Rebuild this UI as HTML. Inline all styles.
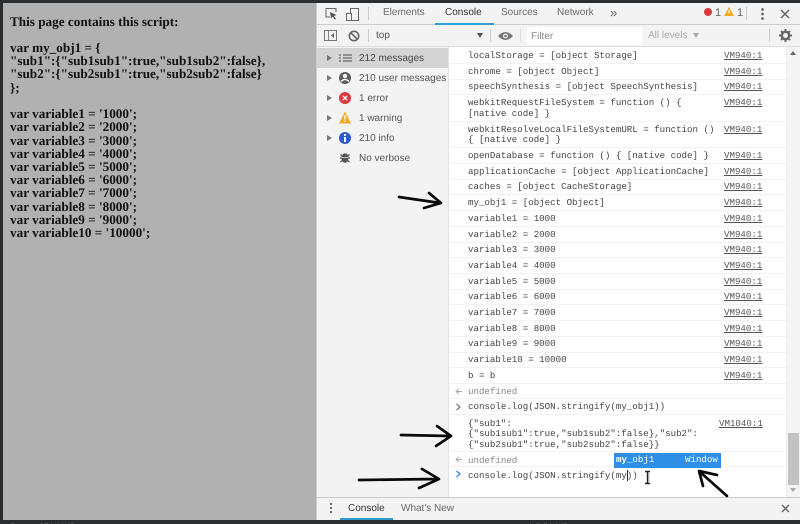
<!DOCTYPE html>
<html><head><meta charset="utf-8">
<style>
html,body{margin:0;padding:0;width:800px;height:524px;overflow:hidden;background:#2b2e31}
#root{position:absolute;left:0;top:0;width:800px;height:524px;overflow:hidden;filter:blur(.35px);text-rendering:geometricPrecision}
.a{position:absolute}
#page{position:absolute;left:3px;top:3px;width:313px;height:517px;background:#b1b1b1}
.p{position:absolute;left:10px;font:bold 13.2px/13px "Liberation Serif",serif;color:#111;white-space:pre}
#dt{position:absolute;left:316px;top:3px;width:484px;height:517px;background:#fff}
.t{position:absolute;font:10px/12px "Liberation Sans",sans-serif;color:#5a5a5a;white-space:pre}
.m{position:absolute;left:468px;font:9.15px/11px "Liberation Mono",monospace;color:#444;white-space:pre}
.v{position:absolute;left:724px;font:9.13px/11px "Liberation Mono",monospace;color:#555;text-decoration:underline;white-space:pre}
.l{position:absolute;left:449px;width:337px;height:1px;background:#f2f2f2}
.tri{position:absolute;left:327px;width:0;height:0;border-left:5px solid #777;border-top:3px solid transparent;border-bottom:3px solid transparent}
</style></head><body>
<div id="root">
<div id="page"></div>
<div class="p" style="top:15px">This page contains this script:</div>
<div class="p" style="top:41px">var my_obj1 = {</div>
<div class="p" style="top:54px">"sub1":{"sub1sub1":true,"sub1sub2":false},</div>
<div class="p" style="top:67px">"sub2":{"sub2sub1":true,"sub2sub2":false}</div>
<div class="p" style="top:81px">};</div>
<div class="p" style="top:107px">var variable1 = '1000';</div>
<div class="p" style="top:120px">var variable2 = '2000';</div>
<div class="p" style="top:134px">var variable3 = '3000';</div>
<div class="p" style="top:147px">var variable4 = '4000';</div>
<div class="p" style="top:160px">var variable5 = '5000';</div>
<div class="p" style="top:173px">var variable6 = '6000';</div>
<div class="p" style="top:186px">var variable7 = '7000';</div>
<div class="p" style="top:200px">var variable8 = '8000';</div>
<div class="p" style="top:213px">var variable9 = '9000';</div>
<div class="p" style="top:226px">var variable10 = '10000';</div>

<div id="dt"></div>
<!-- toolbars -->
<div class="a" style="left:316px;top:3px;width:484px;height:21px;background:#f3f3f3;border-bottom:1px solid #ccc"></div>
<div class="a" style="left:316px;top:25px;width:484px;height:21px;background:#f3f3f3;border-bottom:1px solid #ddd"></div>
<div class="a" style="left:316px;top:3px;width:1px;height:517px;background:#ccc"></div>
<div class="a" style="left:368px;top:7px;width:1px;height:13px;background:#ccc"></div>
<svg class="a" style="left:323px;top:6px" width="50" height="16" viewBox="0 0 50 16">
<path d="M7 11H3V2.500H13V6" fill="none" stroke="#666" stroke-width="1"/><path d="M7 6l6.500 3-2.500 1 2 3-1.200.6-2-3L8 12.500z" fill="#555"/>
<rect x="27.500" y="2.500" width="8" height="12" fill="none" stroke="#666"/><rect x="23.500" y="7.500" width="5" height="7" fill="#f3f3f3" stroke="#666"/>
</svg>
<div class="t" style="left:383px;top:7px;color:#6a6a6a">Elements</div>
<div class="t" style="left:445px;top:7px;color:#333">Console</div>
<div class="a" style="left:435px;top:23px;width:59px;height:2px;background:#2f9fd0"></div>
<div class="t" style="left:501px;top:7px;color:#6a6a6a">Sources</div>
<div class="t" style="left:557px;top:7px;color:#6a6a6a">Network</div>
<div class="t" style="left:610px;top:7px;font-size:13px;color:#666">»</div>
<div class="a" style="left:704px;top:8px;width:8px;height:8px;border-radius:50%;background:#d93a3f"></div>
<div class="t" style="left:715px;top:7px;color:#666;font-size:11px">1</div>
<svg class="a" style="left:724px;top:7px" width="10" height="9"><path d="M5 0L10 9H0z" fill="#f2ab26"/><rect x="4.500" y="3" width="1" height="3.500" fill="#fff"/></svg>
<div class="t" style="left:737px;top:7px;color:#666;font-size:11px">1</div>
<div class="a" style="left:746px;top:7px;width:1px;height:13px;background:#ccc"></div>
<div class="a" style="left:761px;top:8px;width:3px;height:3px;border-radius:50%;background:#666;box-shadow:0 5px 0 #666,0 10px 0 #666;transform:scale(.9)"></div>
<svg class="a" style="left:780px;top:9px" width="10" height="10"><path d="M1 1L9 9M9 1L1 9" stroke="#666" stroke-width="1.500"/></svg>

<!-- second toolbar -->
<svg class="a" style="left:323px;top:29px" width="40" height="14" viewBox="0 0 40 14">
<rect x="1.500" y="1.500" width="12" height="10" fill="none" stroke="#777"/><rect x="5" y="2" width="1" height="9" fill="#888"/><path d="M11 4L8 6.500 11 9z" fill="#666"/>
<circle cx="31" cy="7" r="4.700" fill="none" stroke="#666" stroke-width="1.600"/><path d="M27.800 3.800l6.400 6.400" stroke="#666" stroke-width="1.600"/>
</svg>
<div class="a" style="left:368px;top:29px;width:1px;height:13px;background:#ccc"></div>
<div class="t" style="left:376px;top:30px;color:#555">top</div>
<div class="a" style="left:477px;top:33px;border-top:5px solid #555;border-left:3px solid transparent;border-right:3px solid transparent"></div>
<div class="a" style="left:490px;top:29px;width:1px;height:13px;background:#ccc"></div>
<svg class="a" style="left:498px;top:31px" width="15" height="10"><path d="M0 5Q7.500-3 15 5Q7.500 13 0 5z" fill="#777"/><circle cx="7.500" cy="5" r="2.500" fill="#f3f3f3"/><circle cx="7.500" cy="5" r="1.300" fill="#777"/></svg>
<div class="a" style="left:520px;top:29px;width:1px;height:13px;background:#ddd"></div>
<div class="a" style="left:527px;top:27px;width:115px;height:18px;background:#fff"></div>
<div class="t" style="left:531px;top:31px;color:#888">Filter</div>
<div class="t" style="left:648px;top:30px;color:#aaa">All levels</div>
<div class="a" style="left:693px;top:33px;border-top:5px solid #aaa;border-left:3px solid transparent;border-right:3px solid transparent"></div>
<div class="a" style="left:769px;top:29px;width:1px;height:13px;background:#ccc"></div>
<svg class="a" style="left:779px;top:29px" width="13" height="13" viewBox="0 0 13 13"><circle cx="6.500" cy="6.500" r="3.700" fill="none" stroke="#666" stroke-width="2.400"/><path d="M6.500 0v2.500M6.500 10.500V13M0 6.500h2.500M10.500 6.500H13M2 2l1.700 1.700M9.300 9.300L11 11M11 2L9.300 3.700M3.700 9.300L2 11" stroke="#666" stroke-width="2"/></svg>

<!-- sidebar -->
<div class="a" style="left:317px;top:47px;width:131px;height:450px;background:#f3f3f3;border-right:1px solid #e2e2e2"></div>
<div class="a" style="left:317px;top:48px;width:131px;height:20px;background:#d4d4d4"></div>
<div class="tri" style="top:55px"></div><div class="tri" style="top:75px"></div><div class="tri" style="top:95px"></div><div class="tri" style="top:115px"></div><div class="tri" style="top:135px"></div>
<svg class="a" style="left:338px;top:50px" width="16" height="118" viewBox="0 0 16 118">
<path d="M1 5h2M5 5h9M1 8h2M5 8h9M1 11h2M5 11h9" stroke="#666" stroke-width="1.300" fill="none"/>
<circle cx="7" cy="28" r="6" fill="#5a5a5a"/><circle cx="7" cy="26" r="2.200" fill="#f3f3f3"/><path d="M3 31.500Q7 27.500 11 31.500" stroke="#f3f3f3" stroke-width="1.500" fill="none"/>
<circle cx="7" cy="48" r="6" fill="#d93a3f"/><path d="M4.800 45.800l4.400 4.400M9.200 45.800l-4.400 4.400" stroke="#fff" stroke-width="1.300"/>
<path d="M7 61.500L13 73.500H1z" fill="#f2ab26"/><rect x="6.300" y="65" width="1.400" height="4.500" fill="#fff"/><rect x="6.300" y="70.500" width="1.400" height="1.400" fill="#fff"/>
<circle cx="7" cy="88" r="6" fill="#2a5bd0"/><rect x="6" y="87" width="2" height="5" fill="#fff"/><rect x="6" y="84" width="2" height="2" fill="#fff"/>
<ellipse cx="7" cy="108" rx="3.500" ry="4.800" fill="#555"/><path d="M2.500 104.500l2.500 2M11.500 104.500l-2.500 2M2 108h3M9 108h3M2.500 112l2.500-2M11.500 112l-2.500-2" stroke="#555" stroke-width="1.200"/><path d="M4 107.500h6" stroke="#f3f3f3" stroke-width=".7"/>
</svg>
<div class="t" style="left:359px;top:53px;color:#444">212 messages</div>
<div class="t" style="left:359px;top:73px;color:#555">210 user messages</div>
<div class="t" style="left:359px;top:93px;color:#555">1 error</div>
<div class="t" style="left:359px;top:113px;color:#555">1 warning</div>
<div class="t" style="left:359px;top:133px;color:#555">210 info</div>
<div class="t" style="left:359px;top:153px;color:#555">No verbose</div>

<!-- log lines -->
<div class="l" style="top:63px"></div><div class="l" style="top:79px"></div><div class="l" style="top:94px"></div><div class="l" style="top:121px"></div><div class="l" style="top:147px"></div><div class="l" style="top:163px"></div><div class="l" style="top:179px"></div><div class="l" style="top:194px"></div><div class="l" style="top:210px"></div><div class="l" style="top:226px"></div><div class="l" style="top:242px"></div><div class="l" style="top:257px"></div><div class="l" style="top:273px"></div><div class="l" style="top:289px"></div><div class="l" style="top:304px"></div><div class="l" style="top:320px"></div><div class="l" style="top:336px"></div><div class="l" style="top:352px"></div><div class="l" style="top:367px"></div><div class="l" style="top:383px"></div><div class="l" style="top:398px"></div><div class="l" style="top:414px"></div><div class="l" style="top:451px"></div><div class="l" style="top:466px"></div>

<div class="m" style="top:50px">localStorage = [object Storage]</div><div class="v" style="top:50px">VM940:1</div>
<div class="m" style="top:66px">chrome = [object Object]</div><div class="v" style="top:66px">VM940:1</div>
<div class="m" style="top:81px">speechSynthesis = [object SpeechSynthesis]</div><div class="v" style="top:81px">VM940:1</div>
<div class="m" style="top:97px">webkitRequestFileSystem = function () {</div><div class="v" style="top:97px">VM940:1</div>
<div class="m" style="top:108px">[native code] }</div>
<div class="m" style="top:124px">webkitResolveLocalFileSystemURL = function ()</div><div class="v" style="top:124px">VM940:1</div>
<div class="m" style="top:134px">{ [native code] }</div>
<div class="m" style="top:150px">openDatabase = function () { [native code] }</div><div class="v" style="top:150px">VM940:1</div>
<div class="m" style="top:166px">applicationCache = [object ApplicationCache]</div><div class="v" style="top:166px">VM940:1</div>
<div class="m" style="top:181px">caches = [object CacheStorage]</div><div class="v" style="top:181px">VM940:1</div>
<div class="m" style="top:197px">my_obj1 = [object Object]</div><div class="v" style="top:197px">VM940:1</div>
<div class="m" style="top:213px">variable1 = 1000</div><div class="v" style="top:213px">VM940:1</div>
<div class="m" style="top:229px">variable2 = 2000</div><div class="v" style="top:229px">VM940:1</div>
<div class="m" style="top:244px">variable3 = 3000</div><div class="v" style="top:244px">VM940:1</div>
<div class="m" style="top:260px">variable4 = 4000</div><div class="v" style="top:260px">VM940:1</div>
<div class="m" style="top:276px">variable5 = 5000</div><div class="v" style="top:276px">VM940:1</div>
<div class="m" style="top:291px">variable6 = 6000</div><div class="v" style="top:291px">VM940:1</div>
<div class="m" style="top:307px">variable7 = 7000</div><div class="v" style="top:307px">VM940:1</div>
<div class="m" style="top:323px">variable8 = 8000</div><div class="v" style="top:323px">VM940:1</div>
<div class="m" style="top:338px">variable9 = 9000</div><div class="v" style="top:338px">VM940:1</div>
<div class="m" style="top:354px">variable10 = 10000</div><div class="v" style="top:354px">VM940:1</div>
<div class="m" style="top:370px">b = b</div><div class="v" style="top:370px">VM940:1</div>
<div class="m" style="top:386px;color:#888">undefined</div>
<div class="m" style="top:401px">console.log(JSON.stringify(my_obj1))</div>
<div class="m" style="top:418px">{"sub1":</div><div class="v" style="top:418px;left:719px">VM1040:1</div>
<div class="m" style="top:428px">{"sub1sub1":true,"sub1sub2":false},"sub2":</div>
<div class="m" style="top:439px">{"sub2sub1":true,"sub2sub2":false}}</div>
<div class="m" style="top:455px;color:#888">undefined</div>
<div class="m" style="top:470px">console.log(JSON.stringify(my))</div>

<svg class="a" style="left:454px;top:386px" width="10" height="95" viewBox="0 0 10 95">
<path d="M5 3L2 5.500 5 8M3 5.500h5" stroke="#aaa" fill="none"/>
<path d="M2.500 18l3.500 3-3.500 3" stroke="#777" stroke-width="1.200" fill="none"/>
<path d="M5 71L2 73.500 5 76M3 73.500h5" stroke="#aaa" fill="none"/>
<path d="M2.500 85l3.500 3-3.500 3" stroke="#3a82e0" stroke-width="1.300" fill="none"/>
</svg>

<!-- caret + autocomplete -->
<div class="a" style="left:627px;top:470px;width:1px;height:11px;background:#333"></div>
<div class="a" style="left:614px;top:453px;width:107px;height:15px;background:#2f8fe6"></div>
<div class="a" style="left:616px;top:454px;font:bold 9.13px/12px 'Liberation Mono',monospace;color:#fff;white-space:pre">my<span style="font-weight:normal">_obj1</span></div>
<div class="a" style="left:685px;top:454px;font:9.13px/12px 'Liberation Mono',monospace;color:#fff;white-space:pre">Window</div>
<svg class="a" style="left:643px;top:470px" width="9" height="15"><path d="M2 1.500H7M2 13.500H7M4.500 1.500V13.500" stroke="#222" stroke-width="1.400" fill="none"/><path d="M6 3v9" stroke="#bbb" stroke-width="1"/></svg>

<!-- scrollbar -->
<div class="a" style="left:786px;top:47px;width:14px;height:450px;background:#f4f4f4;border-left:1px solid #eee;box-sizing:border-box"></div>
<div class="a" style="left:790px;top:51px;border-bottom:4px solid #666;border-left:3px solid transparent;border-right:3px solid transparent"></div>
<div class="a" style="left:788px;top:433px;width:11px;height:52px;background:#c2c2c2"></div>
<div class="a" style="left:790px;top:488px;border-top:4px solid #aaa;border-left:3px solid transparent;border-right:3px solid transparent"></div>

<!-- bottom drawer -->
<div class="a" style="left:317px;top:497px;width:483px;height:23px;background:#f3f3f3;border-top:1px solid #ccc;box-sizing:border-box"></div>
<div class="a" style="left:330px;top:503px;width:2px;height:2px;background:#666;box-shadow:0 4px 0 #666,0 8px 0 #666"></div>
<div class="t" style="left:348px;top:503px;color:#333">Console</div>
<div class="a" style="left:340px;top:518px;width:53px;height:2px;background:#2f9fd0"></div>
<div class="t" style="left:401px;top:503px;color:#666">What's New</div>
<svg class="a" style="left:781px;top:504px" width="9" height="9"><path d="M1 1L8 8M8 1L1 8" stroke="#666" stroke-width="1.400"/></svg>

<!-- dark bottom bits -->
<div class="a" style="left:0;top:520px;width:800px;height:4px;background:#2b2e31"></div>
<div class="a" style="left:10px;top:522px;font:9px/10px 'Liberation Sans',sans-serif;color:#aaa;white-space:pre">Prmpt  350 MKB</div>
<div class="a" style="left:528px;top:522px;font:9px/10px 'Liberation Sans',sans-serif;color:#aaa;white-space:pre">1.5.50 MB</div>

<!-- arrows -->
<svg class="a" style="left:0;top:0" width="800" height="524" fill="none" stroke="#0a0a0a" stroke-width="2.700" stroke-linecap="round" stroke-linejoin="round">
<path d="M399 197L440 203M429 193L441 203L424 208"/>
<path d="M401 435L450 436M437 426L451 436L436 446"/>
<path d="M359 480L438 479M422 469L439 479L419 488"/>
<path d="M727 496L700 472M703 486L699 471L717 475"/>
</svg>
</div>
</body></html>
